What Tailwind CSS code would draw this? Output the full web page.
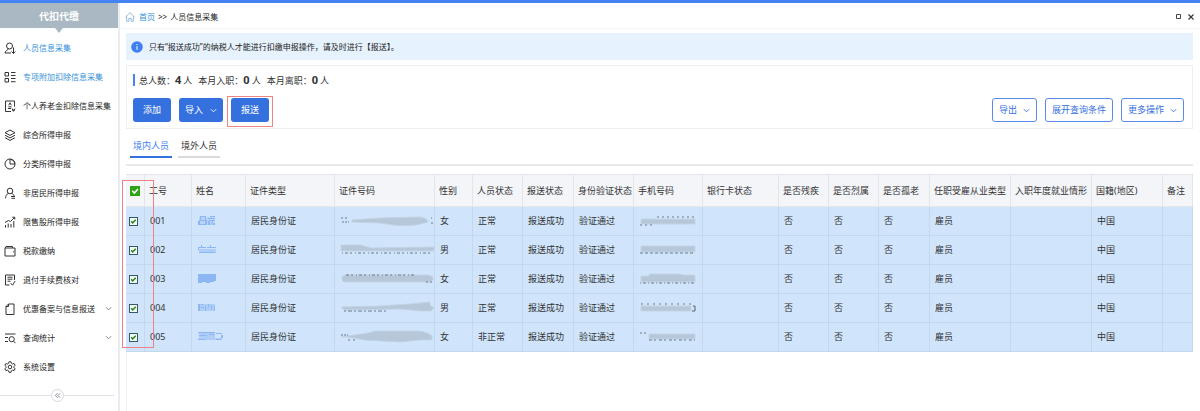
<!DOCTYPE html>
<html lang="zh-CN">
<head>
<meta charset="utf-8">
<meta name="viewport" content="width=device-width, initial-scale=1">
<title>人员信息采集</title>
<script src="https://cdn.jsdelivr.net/npm/@tailwindcss/browser@4"></script>
</head>
<body class="flex min-h-screen flex-col bg-white font-['Noto_Sans','Noto_Sans_CJK_SC',sans-serif] text-[9px] leading-[14px] text-[#333]">
<div class="h-[3px] shrink-0 bg-[#4583f2]"></div>
<div class="flex flex-1">
  <aside class="flex w-[120px] shrink-0 flex-col border-r-2 border-[#ebecf1]">
    <h1 class="relative flex h-[25px] items-center justify-center bg-[#a9b8c2] text-[10px] font-bold text-white">代扣代缴
      <span class="absolute top-full left-1/2 -ml-1 border-x-4 border-t-[5px] border-x-transparent border-t-[#a9b8c2]"></span>
    </h1>
    <nav id="menu" class="flex flex-col pt-[5px] text-[8px] text-[#222]"></nav>
    <div class="mt-2 mr-1 flex items-center">
      <span class="h-px flex-1 bg-[#dfe2e8]"></span>
      <button type="button" aria-label="收起菜单" class="grid size-[13px] place-items-center rounded-full border border-[#d3d8e0] text-[#777]">
        <svg class="size-[7px]" viewBox="0 0 8 8" fill="none" stroke="currentColor"><path d="M4 1.5 1.5 4 4 6.500M7 1.500 4.500 4 7 6.500"/></svg>
      </button>
      <span class="h-px flex-1 bg-[#dfe2e8]"></span>
    </div>
  </aside>

  <main class="flex min-w-0 flex-1 flex-col">
    <header class="flex h-[26px] items-center border-b border-[#f3f4f7] pt-0.5 pr-1.5 pl-[5px] text-[8px] text-[#222]">
      <svg class="mr-1 size-[10px] text-[#7ea6cd]" viewBox="0 0 10 10" fill="none" stroke="currentColor" stroke-width=".8"><path d="M.5 5 5 .7 9.500 5M1.700 4.200v5.100h2.100V6.500h2.400v2.800h2.100V4.200"/></svg>
      <a href="#" class="text-[#2f8fe0]">首页</a>
      <span class="mx-[3px]">&gt;&gt;</span>
      <span>人员信息采集</span>
      <div class="ml-auto flex items-center gap-[7px]">
        <button type="button" aria-label="最大化"><svg class="size-[5px]" viewBox="0 0 5 5" fill="none" stroke="#444"><path d="M.5.5h4v4h-4z"/></svg></button>
        <button type="button" aria-label="关闭"><svg class="size-[6px]" viewBox="0 0 6 6" fill="none" stroke="#333" stroke-width="1.100"><path d="m.5.5 5 5M5.500.5l-5 5"/></svg></button>
      </div>
    </header>

    <div class="flex flex-1 flex-col pt-1 pr-[7px] pl-1.5">
      <div class="flex h-[27px] items-center gap-1.5 bg-[#e6f2fd] pl-[5px] text-[8px] text-[#222]">
        <svg class="size-3" viewBox="0 0 12 12"><circle cx="6" cy="6" r="5.800" fill="#3f7ff0"/><path d="M6 5.200v3.600M6 3v1.200" stroke="#fff" stroke-width="1"/></svg>
        <p>只有“报送成功”的纳税人才能进行扣缴申报操作，请及时进行【报送】。</p>
      </div>

      <section class="mt-[5px] flex flex-col gap-3 border border-[#eceef2] px-1.5 pt-2 pr-2 pb-[6px]">
        <div class="flex h-3 items-center gap-1.5">
          <span class="-mr-0.5 h-3 w-0.5 bg-[#4583f2]"></span>
          <span>总人数：<b class="mr-0.5 text-[11px]">4</b>人</span>
          <span>本月入职：<b class="mr-0.5 text-[11px]">0</b>人</span>
          <span>本月离职：<b class="mr-0.5 text-[11px]">0</b>人</span>
        </div>
        <div class="flex h-6 items-stretch gap-2">
          <button type="button" class="rounded-[3px] bg-[#3571de] px-[10px] text-white">添加</button>
          <button type="button" class="flex items-center gap-[7px] rounded-[3px] bg-[#3571de] px-1.5 text-white">导入<svg class="size-[7px]" viewBox="0 0 8 8" fill="none" stroke="currentColor"><path d="m1 2.500 3 3 3-3"/></svg></button>
          <span class="relative flex">
            <button type="button" class="rounded-[3px] bg-[#3571de] px-[10px] text-white">报送</button>
            <span class="pointer-events-none absolute -inset-x-1 -top-0.5 -bottom-[5px] border border-[#ee8484]"></span>
          </span>
          <button type="button" class="ml-auto flex items-center gap-1.5 rounded-[3px] border border-[#5b8bea] px-1.5 text-[#3571de]">导出<svg class="size-[7px]" viewBox="0 0 8 8" fill="none" stroke="currentColor"><path d="m1 2.500 3 3 3-3"/></svg></button>
          <button type="button" class="rounded-[3px] border border-[#5b8bea] px-1.5 text-[#3571de]">展开查询条件</button>
          <button type="button" class="flex items-center gap-1.5 rounded-[3px] border border-[#5b8bea] px-1.5 text-[#3571de]">更多操作<svg class="size-[7px]" viewBox="0 0 8 8" fill="none" stroke="currentColor"><path d="m1 2.500 3 3 3-3"/></svg></button>
        </div>
      </section>

      <div class="flex h-[37px] items-center gap-1.5 border-b-2 border-[#e8e9eb] pl-1">
        <button type="button" class="h-[22px] border-b-2 border-[#3571de] px-[3px] text-[#3f7ff0]">境内人员</button>
        <button type="button" class="h-[22px] border-b-2 border-[#d9dadc] px-[3px]">境外人员</button>
      </div>

      <div class="relative mt-[8px] flex-1 border-l border-[#eef0f4]">
        <table class="-ml-px w-full table-fixed border-separate border-spacing-0 text-left whitespace-nowrap">
          <colgroup>
            <col class="w-[19px]"><col class="w-[47px]"><col class="w-[54px]"><col class="w-[89px]"><col class="w-[100px]"><col class="w-[38px]"><col class="w-[50px]"><col class="w-[51px]"><col class="w-[60px]"><col class="w-[69px]"><col class="w-[76px]"><col class="w-[50px]"><col class="w-[50px]"><col class="w-[51px]"><col class="w-[81px]"><col class="w-[81px]"><col class="w-[71px]"><col class="w-[30px]">
          </colgroup>
          <thead><tr id="head" class="h-[33px] bg-[#f4f5f9]"></tr></thead>
          <tbody id="rows"></tbody>
        </table>
        <span class="pointer-events-none absolute top-[6px] -left-[5px] h-[168px] w-8 border border-[#f07f86]"></span>
      </div>
    </div>
  </main>
</div>

<script>
const menu = [
  ['人员信息采集', '<circle cx="5.500" cy="4" r="3"/><path d="M4.300 6.600C4.300 8.500 1 8.300 1 11h6M9.500 5.500v6M7.500 9.500l2 2 1.800-2"/>', 'link'],
  ['专项附加扣除信息采集', '<path d="M1 1.500h3.500V5H1zM1 7.500h3.500V11H1zM7 1.500h4.500M7 4.500h4.500M7 7.500h4.500M7 10.700h4.500"/>', 'link'],
  ['个人养老金扣除信息采集', '<path d="M10.500 6.500V1h-9v10.500H7M4.700 5.300 6 2.800l1.300 2.500M4 8.500h3M4.500 6.800h3M8 8.500l1.500 2.800L11 8.500M8 10h3"/>'],
  ['综合所得申报', '<path d="m6 1 5 2.700-5 2.700-5-2.700zM1 6.200l5 2.700 5-2.700M1 8.700l5 2.700 5-2.700"/>'],
  ['分类所得申报', '<circle cx="6" cy="6" r="5"/><path d="M6 1v5h5M6.500 1.500c2.500.3 4 2 4.300 4.200"/>'],
  ['非居民所得申报', '<circle cx="6" cy="4" r="2.800"/><path d="M4.500 6.300C2.500 7.300 1.700 9 1.500 11.300M7.500 6.300c1.500.7 2.300 1.500 2.700 2.700M7 9.500h4M7.500 11.300h3.500"/>'],
  ['限售股所得申报', '<path d="M1.500 9v2.500M4.200 7.500v4M7 8v3.500M9.800 5v6.500M1 6.500l3.500-2 2 1L10.500 1.500M8.300 1.200h2.500v2.300"/>'],
  ['税款缴纳', '<path d="M1 3h10v8H1zM1 3l1-1.500h6.500V3M9 6.800h1"/>'],
  ['退付手续费核对', '<path d="M10.500 6V1h-9v10h4M3.500 3.200h5M3.500 5.200h5M3.500 7.200h3M6.800 9.200l1.700 2 2.700-4.200"/>'],
  ['优惠备案与信息报送', '<path d="M4.500 1H10v10.500H2V3.500zM4.500 1v2.500H2"/>', 'more'],
  ['查询统计', '<path d="M1 2h10.500M1 5.500h3M1 9.500h3"/><circle cx="7.700" cy="7.200" r="2.600"/><path d="m9.600 9.200 1.900 2"/>', 'more'],
  ['系统设置', '<path d="m5 .8-.4 1.500-1.200.7-1.500-.5-1 1.800L2 5.400v1.300L.9 7.800l1 1.800 1.500-.5 1.200.7.4 1.500h2l.4-1.500 1.200-.7 1.500.5 1-1.800L10 6.700V5.400l1.100-1.100-1-1.800-1.500.5-1.200-.7L7 .8z"/><circle cx="6" cy="6" r="1.800"/>']
];
document.getElementById('menu').innerHTML = menu.map(([label, icon, kind]) => `
  <a href="#" class="flex h-[29px] items-center pl-1 pr-1.5 whitespace-nowrap ${kind === 'link' ? 'text-[#3590d8]' : ''}">
    <svg class="mr-[7px] size-3 shrink-0 text-[#333]" viewBox="0 0 12 12" fill="none" stroke="currentColor" aria-hidden="true">${icon}</svg>${label}
    ${kind === 'more' ? '<svg class="ml-auto size-[7px] text-[#777]" viewBox="0 0 8 8" fill="none" stroke="currentColor"><path d="m1 2.500 3 3 3-3"/></svg>' : ''}
  </a>`).join('');

const heads = ['工号','姓名','证件类型','证件号码','性别','人员状态','报送状态','身份验证状态','手机号码','银行卡状态','是否残疾','是否烈属','是否孤老','任职受雇从业类型','入职年度就业情形','国籍(地区)','备注'];
document.getElementById('head').innerHTML = `
  <th class="border-t border-r border-b border-[#e2e5ea] pl-1"><span class="relative grid size-[10px]">
    <input type="checkbox" checked aria-label="全选" class="size-[10px] appearance-none bg-[#2ba313]">
    <svg class="pointer-events-none absolute inset-0 size-[10px]" viewBox="0 0 9 9" fill="none" stroke="#fff" stroke-width="1.500"><path d="m2 4.300 1.900 2L7.200 2.700"/></svg></span></th>` +
  heads.map(h => `<th class="border-t border-r border-b border-[#e2e5ea] pl-1 font-normal">${h}</th>`).join('');

// Masked values: a smear with the remains of the digits along one edge.
const smear = (w, shape, marks) => `<svg class="block h-4" width="${w}" height="16" viewBox="0 0 ${w} 16" aria-label="已隐藏"><path d="${shape}" fill="#b6c7da" stroke="#c2d3e5" stroke-linejoin="round"/>${marks}</svg>`;
const dash = (x1, x2, y, pattern) => `<path d="M${x1} ${y}H${x2}" stroke="#6b7a8b" stroke-width="1" stroke-dasharray="${pattern}"/>`;
const people = [
  ['001', '女', '正常',
    '<path d="M3 3h6v1H3zM3 4h1v3H3zM8 4h1v3H8zM2 7h8v1H2zM1 8h2v3H1zM8 8h2v3H8zM1 11h9v1H1zM13 3h5v1h-5zM11 5h7v1h-7zM12 7h6v1h-6zM11 8h2v4h-2zM15 8h1v2h-1zM14 10h1v2h-1zM16 10h2v2h-2z"/><path d="M2 4h16v8H2z" opacity=".35"/>',
    smear(93, 'M12 7 40 5 80 4Q88 5 88 9L76 12Q58 14 40 10L12 9z', dash(1, 9, 5, '2 2') + dash(2, 9, 9, '2 1') + dash(91, 93, 5, '1 1') + dash(91, 93, 10, '2')),
    smear(58, 'M2 6h54v5H2z', dash(18, 56, 4, '2 3') + dash(1, 14, 12, '2 3'))],
  ['002', '男', '正常',
    '<path d="M4 3h1v2H4zM1 5h8v1H1zM1 6h1v2H1zM13 3h1v2h-1zM10 5h9v1h-9zM2 10h16v1H2z"/><path d="M2 7h17v4H2z" opacity=".5"/>',
    smear(95, 'M1 3h20l10 3 63-1v4H1z', dash(2, 91, 11, '1 2 3 2 2 3')),
    smear(58, 'M2 4h54v6H2z', dash(1, 56, 11, '3 2'))],
  ['003', '女', '正常',
    '<path d="M1 3h18v7h-2v1h-4v1H9v-1H5v1H1z"/>',
    smear(94, 'M2 6 5 4H89l4 2v3l-3 2H4l-2-2z', dash(6, 76, 4, '3 2 2 3 1 2') + dash(86, 92, 11, '2 2')),
    smear(58, 'M2 5h8V3h30l4 1h12v7H2z', dash(1, 56, 12, '1 2 3 2'))],
  ['004', '男', '正常',
    '<path d="M1 4h2v7H1zM4 4h2v1H4zM4 7h3v1H4zM8 6h1v5H8zM11 4h1v3h-1zM14 5h1v4h-1zM17 6h1v5h-1z"/><path d="M1 4h17v7H1z" opacity=".5"/>',
    smear(95, 'M1 7 40 6 70 4 90 2V5l4 3-3 3H80L60 9 4 10z', dash(4, 46, 11, '2 2 4 2')),
    smear(58, 'M2 6h50v5H2z', dash(2, 54, 4, '2 4') + '<path d="M54 6h2v5h-3" fill="none" stroke="#52606f"/>')],
  ['005', '女', '非正常',
    '<path d="M1 3h17v1H1zM2 6h8v1H2zM1 10h8v1H1zM12 5h5v1h-5zM19 4h6v1h-6zM24 6h2v3h-2zM19 10h5v1h-5z"/><path d="M2 4h16v5h7v2H2z" opacity=".5"/>',
    smear(93, 'M1 8 28 4 35 2H78Q88 3 92 7v4L80 11 60 13 24 11 8 8z', dash(1, 8, 6, '2 1') + dash(8, 16, 11, '2 3')),
    smear(58, 'M10 5h46v5H10z', dash(1, 8, 4, '2 2') + dash(10, 56, 11, '3 2 2 3'))]
];
document.getElementById('rows').innerHTML = people.map(([no, sex, state, name, id, phone]) => {
  const cells = [no, `<svg class="block h-4 w-7" viewBox="0 0 28 16" fill="#8db7f3" aria-label="已隐藏">${name}</svg>`, '居民身份证', id, sex, state, '报送成功', '验证通过', phone, '', '否', '否', '否', '雇员', '', '中国', ''];
  return `<tr class="h-[29px] bg-[#d0e5fb]">
    <td class="border-r border-b border-[#c3d8ea] pl-[3px]"><span class="relative grid size-[9px]">
      <input type="checkbox" checked aria-label="选择 ${no}" class="size-[9px] appearance-none border border-[#335a6b] bg-[#f3faf0]">
      <svg class="pointer-events-none absolute inset-0 size-[9px]" viewBox="0 0 9 9" fill="none" stroke="#25801d" stroke-width="1.500"><path d="m2.200 4.300 1.500 1.700 3-3.200"/></svg></span></td>
    ${cells.map(c => `<td class="border-r border-b border-[#c3d8ea] pl-[5px]">${c}</td>`).join('')}</tr>`;
}).join('');
</script>
</body>
</html>
